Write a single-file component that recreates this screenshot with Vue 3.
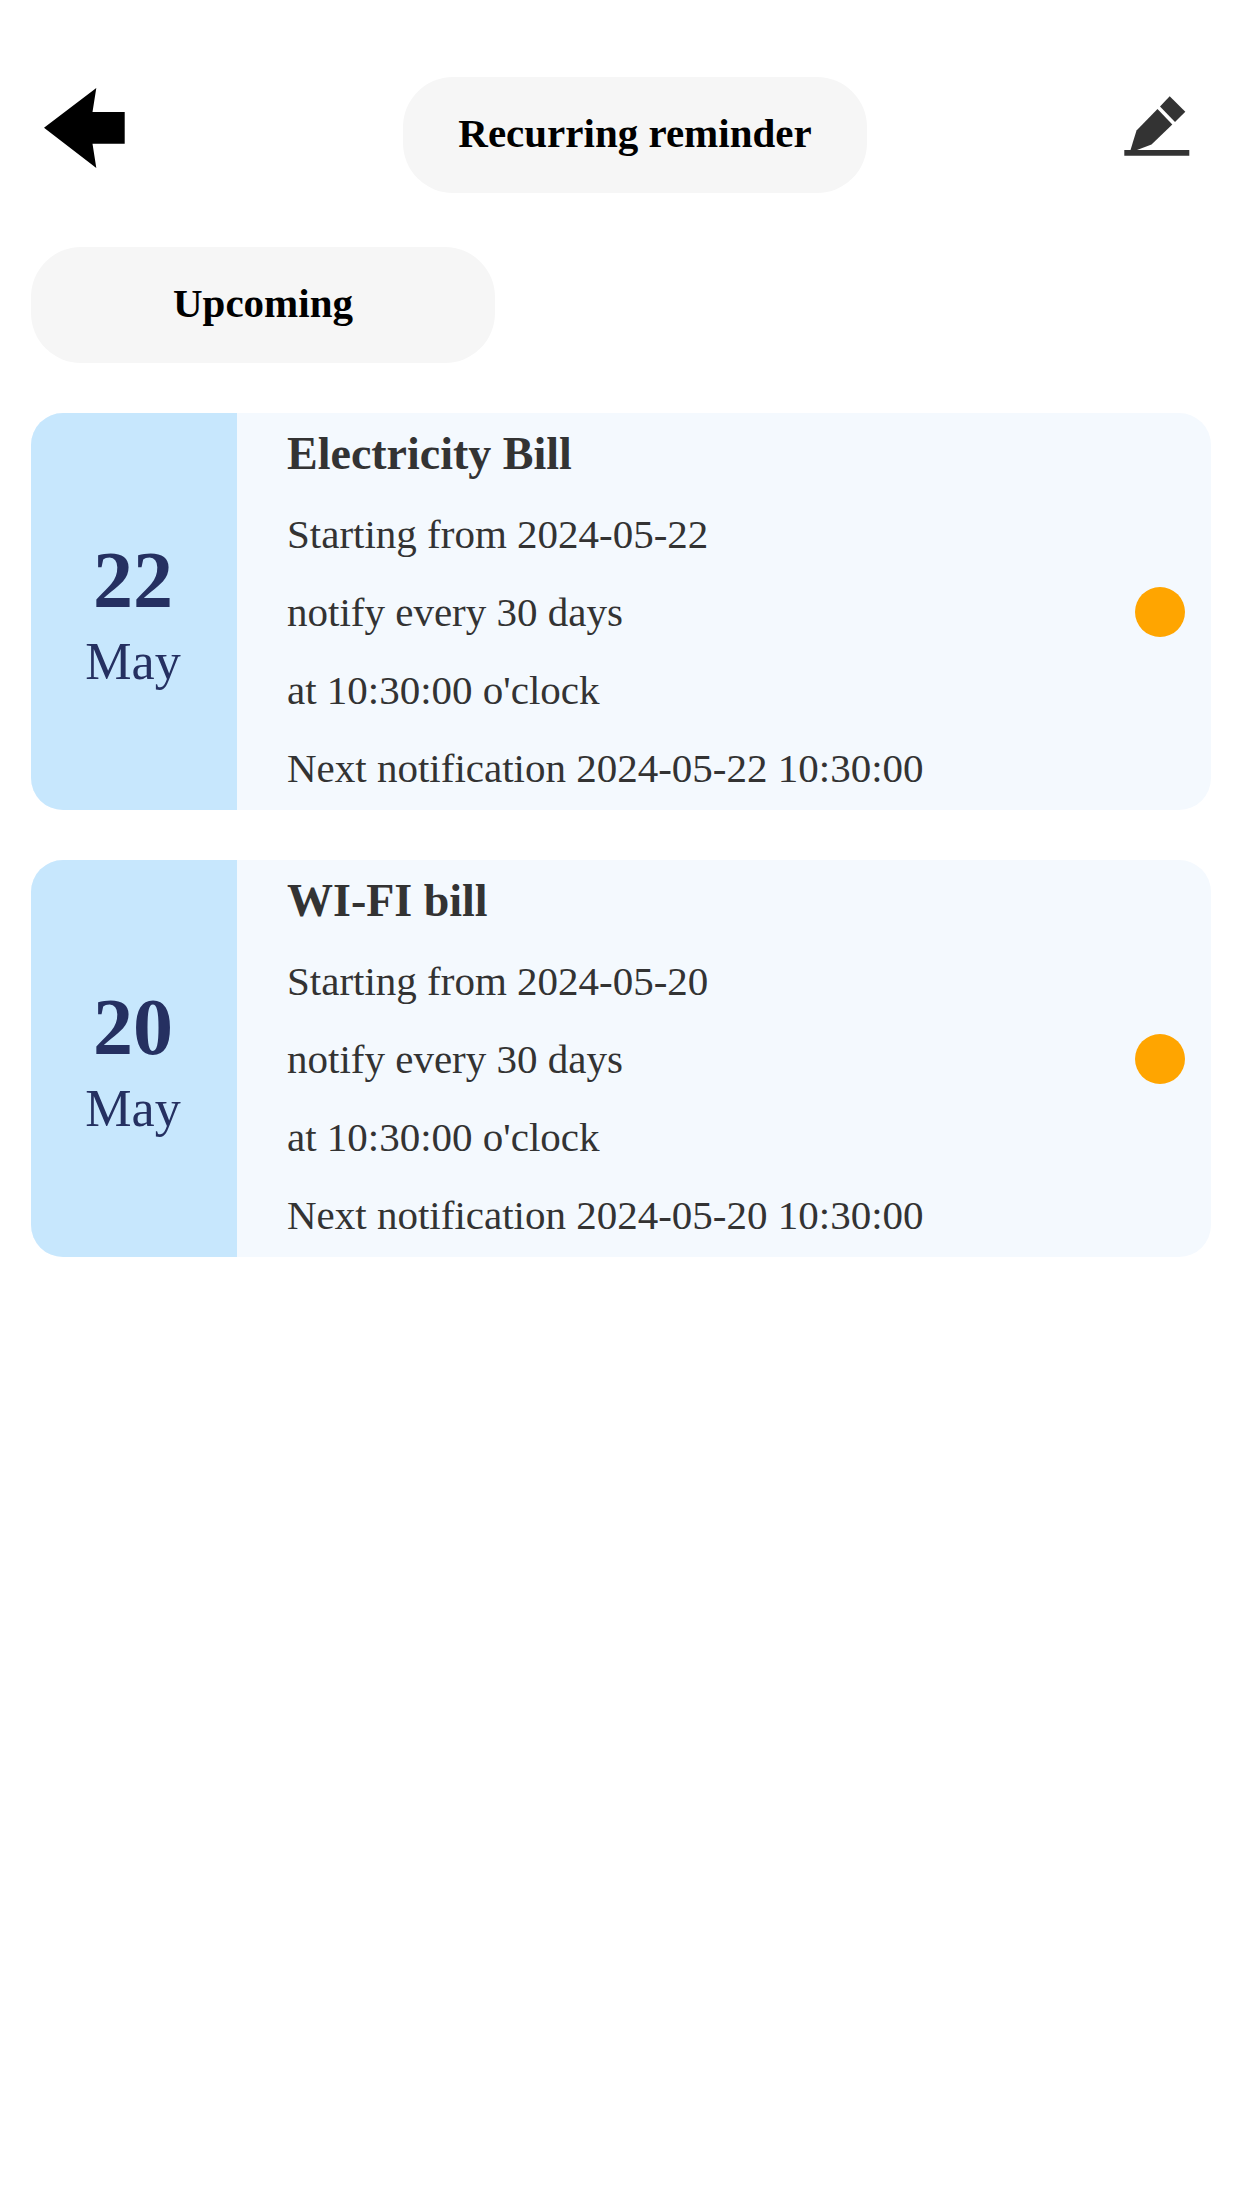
<script setup>
import { ref } from "vue";

const editing = ref(false);

const reminders = ref([
  {
    id: 1,
    day: "22",
    month: "May",
    name: "Electricity Bill",
    start: "2024-05-22",
    interval: 30,
    time: "10:30:00",
    next: "2024-05-22 10:30:00",
  },
  {
    id: 2,
    day: "20",
    month: "May",
    name: "WI-FI bill",
    start: "2024-05-20",
    interval: 30,
    time: "10:30:00",
    next: "2024-05-20 10:30:00",
  },
]);

function goBack() {
  window.history.back();
}

function toggleEdit() {
  editing.value = !editing.value;
}
</script>

<template>
  <div class="page">
    <!-- Top bar -->
    <header class="header">
      <button class="icon-btn" type="button" aria-label="Back" @click="goBack">
        <svg width="128" height="116" viewBox="0 0 128 116">
          <path d="M13 50.7 65.3 11 61.5 35H93.7V66.7H61.5L65.3 91Z" fill="#000" />
        </svg>
      </button>
      <h1 class="pill">Recurring reminder</h1>
      <button class="icon-btn" type="button" aria-label="Edit" @click="toggleEdit">
        <svg width="100" height="116" viewBox="0 0 100 116" fill="#333">
          <path d="M58.7 19.3 74.3 34.7 64 45 49 29.5Z" />
          <path d="M46.5 32 61.3 47.5 40.5 67.5 26 73H19.5L25.5 53.5Z" />
          <path d="M13.3 73H78.3V78.7H13.3Z" />
        </svg>
      </button>
    </header>

    <h2 class="pill">Upcoming</h2>

    <!-- Reminder cards -->
    <ul class="list">
      <li v-for="item in reminders" :key="item.id" class="card">
        <div class="card__date">
          <span class="card__day">{{ item.day }}</span>
          <span class="card__month">{{ item.month }}</span>
        </div>
        <div class="card__info">
          <h3 class="card__title">{{ item.name }}</h3>
          <p>Starting from {{ item.start }}</p>
          <p>notify every {{ item.interval }} days</p>
          <p>at {{ item.time }} o'clock</p>
          <p>Next notification {{ item.next }}</p>
        </div>
        <span class="card__dot"></span>
      </li>
    </ul>
  </div>
</template>

<style>
body {
  margin: 0;
  background: #fff;
}
</style>

<style scoped>
.page {
  padding: 77px 31px 50px;
  font-family: "Liberation Serif", "Times New Roman", serif;
  color: #333;
}

.header {
  display: flex;
  justify-content: space-between;
  align-items: center;
  margin-bottom: 54px;
}

.icon-btn {
  display: block;
  padding: 0;
  border: none;
  background: none;
  cursor: pointer;
}

.icon-btn svg {
  display: block;
}

.pill {
  box-sizing: border-box;
  width: 464px;
  margin: 0;
  padding-bottom: 4px;
  border-radius: 50px;
  background: #f6f6f6;
  color: #000;
  font-size: 41px;
  line-height: 112px;
  font-weight: bold;
  text-align: center;
}

/* Cards */
.list {
  display: flex;
  flex-direction: column;
  gap: 50px;
  margin: 50px 0 0;
  padding: 0;
  list-style: none;
}

.card {
  display: flex;
  align-items: center;
  overflow: hidden;
  border-radius: 32px;
  background: #f4f9fe;
}

.card__date {
  box-sizing: border-box;
  display: flex;
  flex-direction: column;
  align-items: center;
  align-self: stretch;
  justify-content: center;
  width: 206px;
  padding-right: 2px;
  background: #c7e7fd;
  color: #253061;
}

.card__day {
  font-size: 80px;
  line-height: 100px;
  font-weight: bold;
}

.card__month {
  font-size: 52px;
  line-height: 64px;
}

.card__info {
  flex: 1;
  padding: 0 50px 3px;
  font-size: 41px;
  line-height: 78px;
}

.card__info p {
  margin: 0;
}

.card__title {
  margin: 0;
  font-size: 46px;
  line-height: 82px;
}

.card__dot {
  width: 50px;
  height: 50px;
  margin-right: 26px;
  border-radius: 50%;
  background: #ffa500;
}
</style>
